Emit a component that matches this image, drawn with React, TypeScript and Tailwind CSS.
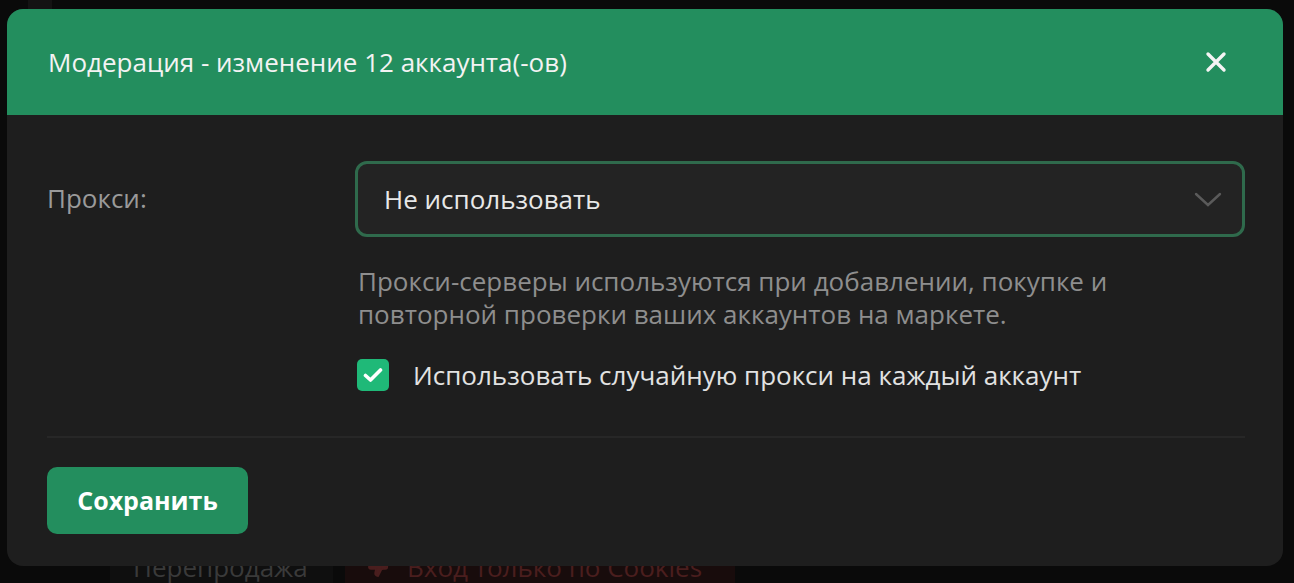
import { ThumbsDown } from 'lucide-react';

const font = { fontFamily: '"Open Sans", "Noto Sans", sans-serif' };

function CloseIcon() {
  return (
    <svg width="22" height="22" viewBox="0 0 22 22" fill="none">
      <path d="M3 3L19 19M19 3L3 19" stroke="#f4f4f4" strokeWidth="3.4" strokeLinecap="round" />
    </svg>
  );
}

function Chevron() {
  return (
    <svg width="28" height="16" viewBox="0 0 28 16" fill="none">
      <path d="M2 3L14 14L26 3" stroke="#5a5a5a" strokeWidth="2.4" strokeLinecap="round" />
    </svg>
  );
}

function CheckIcon() {
  return (
    <svg width="20" height="16" viewBox="0 0 20 16" fill="none">
      <path d="M2.5 8.5L7.5 13L17.5 3" stroke="#ffffff" strokeWidth="3.6" strokeLinecap="round" strokeLinejoin="round" />
    </svg>
  );
}

// dimmed page behind the modal
function Backdrop() {
  return (
    <div className="flex h-full flex-col bg-[#0a0a0a]">
      <div className="flex h-[9px]">
        <div className="ml-[28px] w-[24px] bg-[#141313]" />
      </div>
      <div className="flex-1" />
      <div className="flex h-[32px] items-center gap-[12px] pl-[110px]">
        <div className="flex h-full w-[223px] items-center bg-[#0f0f0f] pl-[23px] text-[26px] text-[#3a3a3a]">
          Перепродажа
        </div>
        <div className="flex h-full w-[390px] items-center gap-[18px] bg-[#180c0c] pl-[22px] text-[26px] text-[#4a1e1e]">
          <ThumbsDown size={22} color="#4a1e1e" fill="#4a1e1e" strokeWidth={2} />
          <span>Вход только по Cookies</span>
        </div>
      </div>
    </div>
  );
}

export default function App() {
  return (
    <div className="relative h-[583px] w-[1294px] overflow-hidden" style={font}>
      <Backdrop />

      <div className="absolute left-[7px] top-[9px] w-[1276px] overflow-hidden rounded-[16px] bg-[#1e1e1e]">
        <div className="flex h-[106px] items-center justify-between bg-[#238e5e] pl-[41px] pr-[56px]">
          <h2 className="text-[26px] text-[#f3f3f3]">Модерация - изменение 12 аккаунта(-ов)</h2>
          <CloseIcon />
        </div>

        <div className="px-[40px] pr-[38px] pt-[46px]">
          <div className="flex">
            <div className="w-[308px] pt-[18px] text-[26px] text-[#9a9a9a]">Прокси:</div>
            <div className="flex-1">
              <div className="flex h-[76px] items-center justify-between rounded-[12px] border-[3px] border-[#2f6a4c] bg-[#232323] pl-[26px] pr-[20px]">
                <span className="text-[26px] text-[#e8e8e8]">Не использовать</span>
                <Chevron />
              </div>
              <p className="mt-[28px] pl-[3px] text-[26px] leading-[33px] text-[#8e8e8e]">
                Прокси-серверы используются при добавлении, покупке и
                <br />
                повторной проверки ваших аккаунтов на маркете.
              </p>
              <label className="mt-[28px] flex h-[32px] items-center gap-[24px] pl-[2px]">
                <span className="flex h-[32px] w-[32px] items-center justify-center rounded-[5px] bg-[#1fb978]">
                  <CheckIcon />
                </span>
                <span className="text-[26px] leading-[32px] text-[#e2e2e2]">
                  Использовать случайную прокси на каждый аккаунт
                </span>
              </label>
            </div>
          </div>

          <div className="mt-[45px] h-[2px] bg-[#272727]" />

          <div className="pb-[32px] pt-[29px]">
            <button className="h-[67px] w-[201px] rounded-[10px] bg-[#238e5e] text-[25px] font-bold text-white">
              Сохранить
            </button>
          </div>
        </div>
      </div>
    </div>
  );
}
